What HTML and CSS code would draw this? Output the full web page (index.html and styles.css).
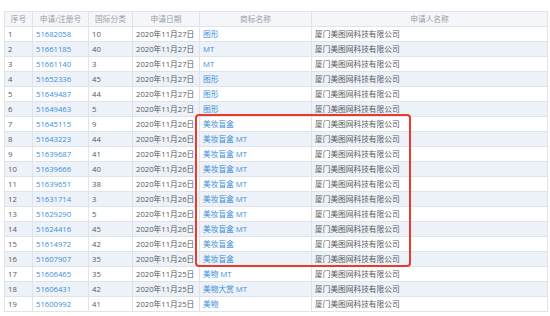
FILE: index.html
```html
<!DOCTYPE html>
<html lang="zh-CN">
<head>
<meta charset="utf-8">
<link rel="stylesheet" href="styles.css">
</head>
<body>
<div class="wrap">
  <table class="grid">
    <colgroup>
      <col class="c1"><col class="c2"><col class="c3"><col class="c4"><col class="c5"><col class="c6">
    </colgroup>
    <thead>
      <tr><th>序号</th><th>申请/注册号</th><th>国际分类</th><th>申请日期</th><th>商标名称</th><th>申请人名称</th></tr>
    </thead>
    <tbody>
      <tr><td>1</td><td class="lk">51682058</td><td>10</td><td>2020年11月27日</td><td class="lk">图形</td><td>厦门美图网科技有限公司</td></tr>
      <tr><td>2</td><td class="lk">51661185</td><td>40</td><td>2020年11月27日</td><td class="lk">MT</td><td>厦门美图网科技有限公司</td></tr>
      <tr><td>3</td><td class="lk">51661140</td><td>3</td><td>2020年11月27日</td><td class="lk">MT</td><td>厦门美图网科技有限公司</td></tr>
      <tr><td>4</td><td class="lk">51652336</td><td>45</td><td>2020年11月27日</td><td class="lk">图形</td><td>厦门美图网科技有限公司</td></tr>
      <tr><td>5</td><td class="lk">51649487</td><td>44</td><td>2020年11月27日</td><td class="lk">图形</td><td>厦门美图网科技有限公司</td></tr>
      <tr><td>6</td><td class="lk">51649463</td><td>5</td><td>2020年11月27日</td><td class="lk">图形</td><td>厦门美图网科技有限公司</td></tr>
      <tr><td>7</td><td class="lk">51645115</td><td>9</td><td>2020年11月26日</td><td class="lk">美妆盲盒</td><td>厦门美图网科技有限公司</td></tr>
      <tr><td>8</td><td class="lk">51643223</td><td>44</td><td>2020年11月26日</td><td class="lk">美妆盲盒 MT</td><td>厦门美图网科技有限公司</td></tr>
      <tr><td>9</td><td class="lk">51639687</td><td>41</td><td>2020年11月26日</td><td class="lk">美妆盲盒 MT</td><td>厦门美图网科技有限公司</td></tr>
      <tr><td>10</td><td class="lk">51639666</td><td>40</td><td>2020年11月26日</td><td class="lk">美妆盲盒 MT</td><td>厦门美图网科技有限公司</td></tr>
      <tr><td>11</td><td class="lk">51639651</td><td>38</td><td>2020年11月26日</td><td class="lk">美妆盲盒 MT</td><td>厦门美图网科技有限公司</td></tr>
      <tr><td>12</td><td class="lk">51631714</td><td>3</td><td>2020年11月26日</td><td class="lk">美妆盲盒 MT</td><td>厦门美图网科技有限公司</td></tr>
      <tr><td>13</td><td class="lk">51629290</td><td>5</td><td>2020年11月26日</td><td class="lk">美妆盲盒 MT</td><td>厦门美图网科技有限公司</td></tr>
      <tr><td>14</td><td class="lk">51624416</td><td>45</td><td>2020年11月26日</td><td class="lk">美妆盲盒 MT</td><td>厦门美图网科技有限公司</td></tr>
      <tr><td>15</td><td class="lk">51614972</td><td>42</td><td>2020年11月26日</td><td class="lk">美妆盲盒</td><td>厦门美图网科技有限公司</td></tr>
      <tr><td>16</td><td class="lk">51607907</td><td>35</td><td>2020年11月26日</td><td class="lk">美妆盲盒</td><td>厦门美图网科技有限公司</td></tr>
      <tr><td>17</td><td class="lk">51606465</td><td>35</td><td>2020年11月25日</td><td class="lk">美物 MT</td><td>厦门美图网科技有限公司</td></tr>
      <tr><td>18</td><td class="lk">51606431</td><td>42</td><td>2020年11月25日</td><td class="lk">美物大赏 MT</td><td>厦门美图网科技有限公司</td></tr>
      <tr><td>19</td><td class="lk">51600992</td><td>41</td><td>2020年11月25日</td><td class="lk">美物</td><td>厦门美图网科技有限公司</td></tr>
    </tbody>
  </table>
  <div class="mark"></div>
</div>
</body>
</html>
```

FILE: styles.css
```css
html, body {
  margin: 0;
  padding: 0;
  background: #ffffff;
}
.wrap {
  position: relative;
  padding: 11px 3px 0 4px;
  font-family: "Open Sans", "Noto Sans CJK SC", sans-serif;
  font-size: 7.7px;
  color: #555a60;
}
.grid {
  width: 543px;
  table-layout: fixed;
  border-collapse: collapse;
  border: 1px solid #e3e7ec;
}
.c1 { width: 28px; }
.c2 { width: 56px; }
.c3 { width: 44px; }
.c4 { width: 67px; }
.c5 { width: 112px; }
.c6 { width: 236px; }
.grid th,
.grid td {
  height: 15px;
  box-sizing: border-box;
  padding: 0 3px;
  border: 1px solid #dfe4ea;
  line-height: 13px;
  white-space: nowrap;
  overflow: hidden;
  text-align: left;
  font-weight: normal;
}
.grid th {
  text-align: center;
  background: #f4f6f9;
  color: #9a9ea5;
}
.grid tbody tr:nth-child(even) td {
  background: #edf2f8;
}
.grid td.lk {
  color: #3d8fd8;
}
.mark {
  position: absolute;
  left: 195px;
  top: 114px;
  width: 216px;
  height: 153px;
  box-sizing: border-box;
  border: 2px solid #ea3a2c;
  border-radius: 4px;
  pointer-events: none;
}
```
